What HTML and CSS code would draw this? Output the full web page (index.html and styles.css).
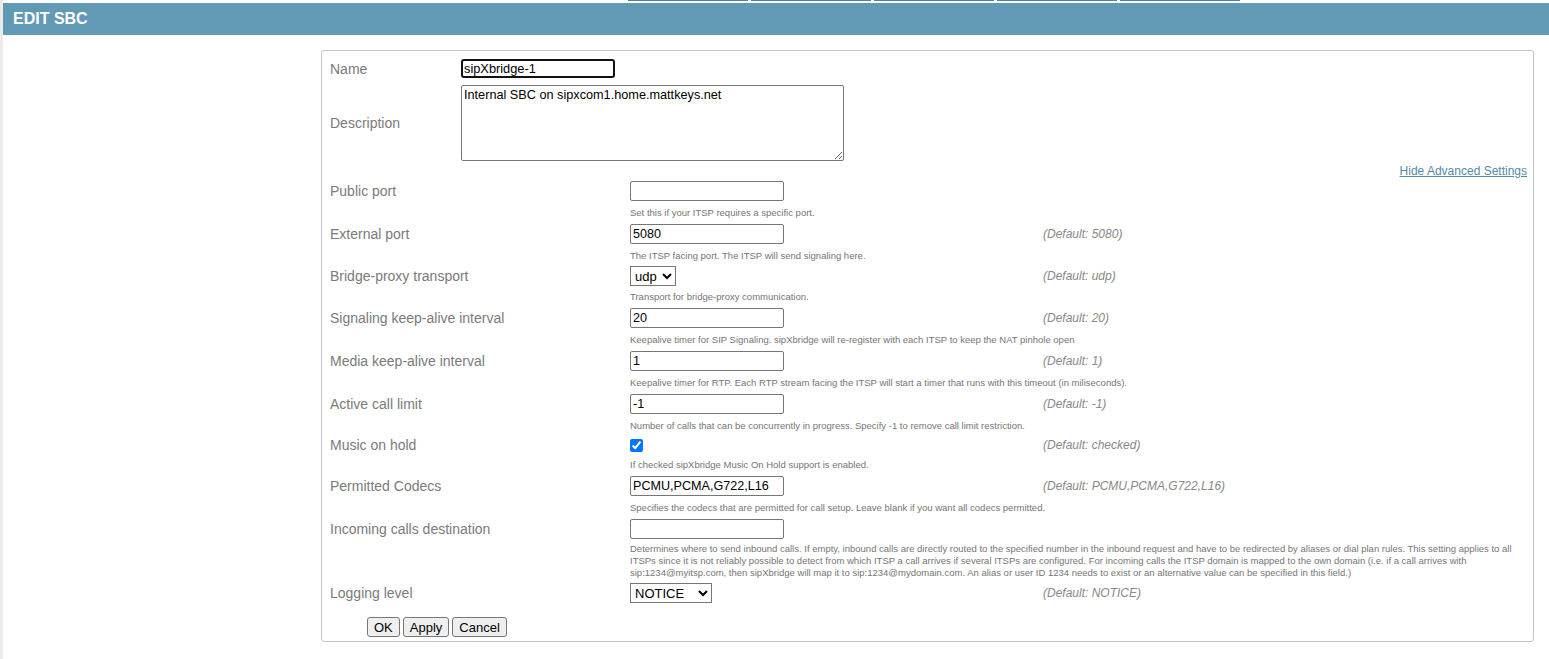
FILE: index.html
```html
<!DOCTYPE html>
<html>
<head>
<meta charset="utf-8">
<title>Edit SBC</title>
<link rel="stylesheet" href="styles.css">
</head>
<body>
<div class="page">
  <div class="tabs"><span></span><span></span><span></span><span></span><span></span></div>
  <div class="header"><h1>EDIT SBC</h1></div>
  <div class="main">
    <form class="box">
      <div class="basic">
        <label class="blbl">Name</label>
        <div class="bctl"><input class="name-input" type="text" value="sipXbridge-1"></div>
        <label class="blbl">Description</label>
        <div class="bctl"><textarea class="desc">Internal SBC on sipxcom1.home.mattkeys.net</textarea></div>
      </div>
      <div class="adv-link"><a href="#">Hide Advanced Settings</a></div>
      <div class="adv">
        <div class="lbl">Public port</div>
        <div class="ctl"><input class="txt" type="text" value=""></div>
        <div class="def"></div>
        <div class="help">Set this if your ITSP requires a specific port.</div>

        <div class="lbl">External port</div>
        <div class="ctl"><input class="txt" type="text" value="5080"></div>
        <div class="def">(Default: 5080)</div>
        <div class="help">The ITSP facing port. The ITSP will send signaling here.</div>

        <div class="lbl">Bridge-proxy transport</div>
        <div class="ctl ctl-sel"><select class="sel sel-udp"><option selected>udp</option><option>tcp</option></select></div>
        <div class="def">(Default: udp)</div>
        <div class="help">Transport for bridge-proxy communication.</div>

        <div class="lbl">Signaling keep-alive interval</div>
        <div class="ctl"><input class="txt" type="text" value="20"></div>
        <div class="def">(Default: 20)</div>
        <div class="help">Keepalive timer for SIP Signaling. sipXbridge will re-register with each ITSP to keep the NAT pinhole open</div>

        <div class="lbl">Media keep-alive interval</div>
        <div class="ctl"><input class="txt" type="text" value="1"></div>
        <div class="def">(Default: 1)</div>
        <div class="help">Keepalive timer for RTP. Each RTP stream facing the ITSP will start a timer that runs with this timeout (in miliseconds).</div>

        <div class="lbl">Active call limit</div>
        <div class="ctl"><input class="txt" type="text" value="-1"></div>
        <div class="def">(Default: -1)</div>
        <div class="help">Number of calls that can be concurrently in progress. Specify -1 to remove call limit restriction.</div>

        <div class="lbl">Music on hold</div>
        <div class="ctl ctl-check"><input class="chk" type="checkbox" checked></div>
        <div class="def">(Default: checked)</div>
        <div class="help">If checked sipXbridge Music On Hold support is enabled.</div>

        <div class="lbl">Permitted Codecs</div>
        <div class="ctl"><input class="txt" type="text" value="PCMU,PCMA,G722,L16"></div>
        <div class="def">(Default: PCMU,PCMA,G722,L16)</div>
        <div class="help">Specifies the codecs that are permitted for call setup. Leave blank if you want all codecs permitted.</div>

        <div class="lbl">Incoming calls destination</div>
        <div class="ctl"><input class="txt" type="text" value=""></div>
        <div class="def"></div>
        <div class="help help-multi">Determines where to send inbound calls. If empty, inbound calls are directly routed to the specified number in the inbound request and have to be redirected by aliases or dial plan rules. This setting applies to all ITSPs since it is not reliably possible to detect from which ITSP a call arrives if several ITSPs are configured. For incoming calls the ITSP domain is mapped to the own domain (i.e. if a call arrives with sip:1234@myitsp.com, then sipXbridge will map it to sip:1234@mydomain.com. An alias or user ID 1234 needs to exist or an alternative value can be specified in this field.)</div>

        <div class="lbl">Logging level</div>
        <div class="ctl ctl-sel"><select class="sel sel-log"><option>DEBUG</option><option>INFO</option><option selected>NOTICE</option><option>WARNING</option><option>ERR</option><option>CRIT</option><option>ALERT</option><option>EMERG</option></select></div>
        <div class="def">(Default: NOTICE)</div>
      </div>
      <div class="buttons">
        <button type="button" class="btn">OK</button>
        <button type="button" class="btn">Apply</button>
        <button type="button" class="btn">Cancel</button>
      </div>
    </form>
  </div>
</div>
</body>
</html>
```
FILE: styles.css
```css
html, body {
  margin: 0;
  padding: 0;
  background: #ffffff;
}
body {
  font-family: "Liberation Sans", Arial, sans-serif;
}
.page {
  border-left: 3px solid #ebebeb;
  min-height: 659px;
  box-sizing: border-box;
}
.tabs {
  display: flex;
  gap: 3px;
  height: 3px;
  padding-left: 625px;
}
.tabs span {
  display: block;
  width: 120px;
  height: 1px;
  background: #4a82a1;
}
.header {
  background: #6299b5;
  height: 32px;
  display: flex;
  align-items: center;
  padding-left: 10px;
}
.header h1 {
  margin: 0;
  font-size: 16px;
  font-weight: bold;
  color: #ffffff;
  line-height: 18px;
}
.main {
  padding: 15px 15px 0 318px;
}
.box {
  border: 1px solid #c4c4c4;
  border-radius: 3px;
  padding: 7px 5px 4px 8px;
  margin: 0;
}
.basic {
  display: grid;
  grid-template-columns: 131px 1fr;
  row-gap: 6px;
  align-items: center;
}
.blbl, .lbl {
  font-size: 14px;
  line-height: 16px;
  color: #7a7a7a;
}
.bctl {
  display: flex;
  align-items: center;
}
.name-input {
  box-sizing: border-box;
  width: 154px;
  height: 19px;
  margin: 1px 0;
  border: 2px solid #111111;
  border-radius: 3px;
  padding: 0 1px;
  font: 12.8px "Liberation Sans", Arial, sans-serif;
  color: #000;
  outline: none;
}
.desc {
  box-sizing: border-box;
  width: 383px;
  height: 76px;
  border: 1px solid #767676;
  border-radius: 2px;
  padding: 2px;
  margin: 0;
  font: 12.7px "Liberation Sans", Arial, sans-serif;
  color: #000;
  display: block;
}
.adv-link {
  margin-top: 3px;
  text-align: right;
  font-size: 12px;
  line-height: 14px;
  padding-right: 1px;
}
.adv-link a {
  color: #5689a8;
  text-decoration: underline;
}
.adv {
  margin-top: 2px;
  display: grid;
  grid-template-columns: 300px 413px 1fr;
}
.lbl, .def {
  display: flex;
  align-items: center;
}
.def {
  font-size: 12px;
  font-style: italic;
  color: #888888;
}
.ctl {
  display: flex;
  align-items: center;
  padding: 1px 0;
}
.ctl-sel {
  padding: 0;
}
.ctl-check {
  padding: 0;
  height: 18px;
}
.txt {
  box-sizing: border-box;
  width: 154px;
  height: 20px;
  margin: 0;
  border: 1px solid #767676;
  border-radius: 2px;
  padding: 1px 2px;
  font: 12.6px "Liberation Sans", Arial, sans-serif;
  color: #000;
}
.sel {
  box-sizing: border-box;
  height: 20px;
  margin: 0;
  font: 13px "Liberation Sans", Arial, sans-serif;
  color: #000;
  border: 1px solid #767676;
  border-radius: 0;
  background: #fff;
}
.sel-udp { width: 46px; }
.sel-log { width: 82px; }
.chk {
  margin: 0;
  width: 13px;
  height: 13px;
  accent-color: #0075ff;
}
.help {
  grid-column: 2 / 4;
  font-size: 9.5px;
  line-height: 12px;
  padding: 5px 0 4px;
  color: #757575;
}
.help-multi {
  padding-top: 3px;
}
.buttons {
  display: flex;
  gap: 3px;
  margin-top: 14px;
  padding-left: 37px;
}
.btn {
  box-sizing: border-box;
  height: 20px;
  padding: 1px 6px;
  margin: 0;
  border: 1px solid #767676;
  border-radius: 3px;
  background: #efefef;
  font: 13px "Liberation Sans", Arial, sans-serif;
  color: #000;
}
```
